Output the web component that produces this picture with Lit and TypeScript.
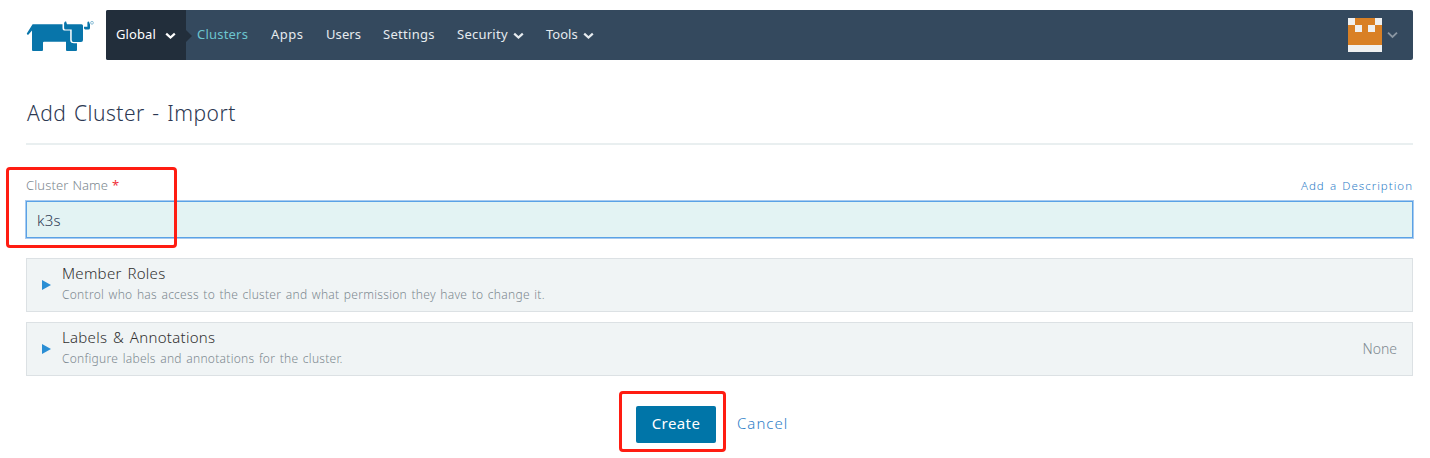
import { LitElement, html, css, svg } from "lit";
import { customElement, property } from "lit/decorators.js";

const chevron = svg`<path d="M1.2 1.6 L5.5 5.6 L9.8 1.6" fill="none" stroke="currentColor" stroke-width="2.2"/>`;

@customElement("nav-bar")
class NavBar extends LitElement {
  static styles = css`
    :host { display: flex; height: 50px; flex: 1; background: #34495e; border-radius: 2px; color: #e6ebef; font-size: 13px; font-weight: 400; line-height: 49px; white-space: nowrap; }
    .scope { position: relative; box-sizing: border-box; width: 80px; padding-left: 10px; background: #222e3b; color: #fff; border-radius: 2px 0 0 2px; display: flex; }
    .scope::after { content: ""; position: absolute; left: 80px; top: 20px; border: 6px solid transparent; border-left-color: #222e3b; border-right: 0; }
    .item { display: flex; padding: 0 11px; }
    .label { display: block; }
    .active { color: #6cc5cf; }
    .chev { width: 11px; height: 8px; margin: 22px 0 0 5px; }
    .scope .chev { margin-left: 9px; }
    .user { margin-left: auto; display: flex; padding: 8px 15px 0 0; color: #8a96a2; }
    .avatar { width: 34px; height: 34px; display: block; }
    .user .chev { margin: 13px 0 0 5px; }
    .w-global { width: 40px; letter-spacing: 0.1px; }
    .w-clusters { width: 52px; letter-spacing: 0.2px; }
    .w-apps { width: 33px; letter-spacing: 0.5px; }
    .w-users { width: 35px; letter-spacing: 0.1px; }
    .w-settings { width: 52px; letter-spacing: 0.3px; }
    .w-security { width: 51px; letter-spacing: 0.25px; }
    .w-tools { width: 32px; }
  `;
  render() {
    const item = (t: string, active = false, menu = false) => html`
      <a class="item ${active ? "active" : ""}"><span class="label w-${t.toLowerCase()}">${t}</span>
      ${menu ? html`<svg class="chev" viewBox="0 0 11 8">${chevron}</svg>` : ""}</a>`;
    return html`
      <a class="scope"><span class="label w-global">Global</span><svg class="chev" viewBox="0 0 11 8">${chevron}</svg></a>
      ${item("Clusters", true)}${item("Apps")}${item("Users")}${item("Settings")}${item("Security", false, true)}${item("Tools", false, true)}
      <div class="user">
        <svg class="avatar" viewBox="0 0 34 34" shape-rendering="crispEdges">
          <rect width="34" height="34" fill="#d98025"/>
          <path d="M0 0h7v7H0zM27 0h7v7h-7zM7 7h7v7H7zM20 7h7v7h-7zM0 27h34v7H0z" fill="#f0f0f0"/>
        </svg>
        <svg class="chev" viewBox="0 0 11 8"><path d="M1 1.6 L5.5 6 L10 1.6" fill="none" stroke="currentColor" stroke-width="1.8"/></svg>
      </div>`;
  }
}

@customElement("expand-panel")
class ExpandPanel extends LitElement {
  @property() heading = "";
  @property() detail = "";
  @property() status = "";
  static styles = css`
    :host { display: flex; box-sizing: border-box; height: 54px; border: 1px solid #dce1e4; background: #f0f4f5; align-items: center; padding: 0 15px; margin-bottom: 10px; }
    .arrow { width: 9px; height: 10px; margin-right: 11px; }
    .body { flex: 1; white-space: nowrap; padding-bottom: 4px; }
    .heading { display: block; font-size: 15px; line-height: 20px; color: #303030; letter-spacing: 0.28px; word-spacing: 1.6px; }
    .detail { font-size: 12px; line-height: 18px; color: #7d8990; margin-top: 3px; letter-spacing: 0.28px; word-spacing: 1.05px; }
    .status { font-size: 14px; color: #7d8990; padding-bottom: 2px; }
  `;
  render() {
    return html`
      <svg class="arrow" viewBox="0 0 9 10"><path d="M0 0L9 5L0 10z" fill="#2a8ed4"/></svg>
      <div class="body"><span class="heading">${this.heading}</span><div class="detail">${this.detail}</div></div>
      <span class="status">${this.status}</span>`;
  }
}

@customElement("app-root")
class AppRoot extends LitElement {
  static styles = css`
    :host { display: block; box-sizing: border-box; height: 458px; padding: 10px 17px 0 26px; background: #fff; font-family: "Noto Sans", "Open Sans", sans-serif; font-weight: 300; overflow: hidden; position: relative; }
    .top { display: flex; }
    .logo { width: 68px; height: 32px; margin: 10px 12px 0 0; }
    .title { margin: 36px 0 0; height: 47px; padding-left: 1px; border-bottom: 2px solid #e9eff0; font-size: 21px; line-height: 34px; font-weight: 300; color: #2c3852; letter-spacing: 0.48px; word-spacing: 1.7px; }
    .labels { display: flex; justify-content: space-between; height: 20px; margin-top: 31px; line-height: 18px; font-size: 13px; color: #7d8990; }
    .name-label { letter-spacing: 0.12px; word-spacing: 0.4px; }
    .req { color: #f0313a; font-weight: 400; }
    .link { color: #2f80c8; }
    .describe { font-size: 11.5px; letter-spacing: 1px; word-spacing: 1.2px; line-height: 20px; }
    .field { box-sizing: border-box; display: flex; align-items: center; height: 37px; margin: 5px 0 20px; padding: 0 10px; border: 1px solid #5aa2e6; outline: 1px solid #a8caef; background: #e3f3f3; color: #2c3852; font-size: 15px; line-height: 34px; letter-spacing: 0.3px; }
    .actions { display: flex; margin: 30px 0 0 610px; line-height: 35px; font-size: 15px; }
    .create { width: 80px; height: 37px; background: #0075a8; color: #fff; border-radius: 2px; text-align: center; margin-right: 21px; font-weight: 400; letter-spacing: 0.4px; }
    .cancel { letter-spacing: 1px; }
    .mark { position: absolute; box-sizing: border-box; border: 3px solid #ff1d12; border-radius: 4px; }
    .mark-name { left: 6px; top: 167px; width: 171px; height: 81px; }
    .mark-create { left: 619px; top: 391px; width: 107px; height: 61px; }
  `;
  render() {
    return html`
      <div class="top">
        <svg class="logo" viewBox="26 20 68 32" fill="#0875aa">
          <path d="M32.6 24.2H62.5V28Q62.5 30.6 65 30.6H70.2V40Q70.2 43.3 74 43.3H77V50Q77 51 76 51H67Q66 51 66 50V41.8H44Q43 41.8 43 42.8V50Q43 51 42 51H33Q32 51 32 50V30.5L28.3 34.7Q26.8 34.8 26.8 33.5Z"/>
          <path d="M64.1 23.5Q64.1 21.5 66 21.3L67 24.2H81.5Q83 24.2 83 25.7V40Q83 41.9 81 41.9H73.5Q71.7 41.9 71.7 40V29.5H65.5Q64.1 29.5 64.1 28Z"/>
          <path d="M84 26.8H87.4V22.5Q87.9 21 89 21.8L90 24.5V28Q90 29.6 88.4 29.6H85.3Q84 29.2 84 28Z"/>
          <circle cx="92" cy="22.8" r="1.4" fill="none" stroke="#5da3c6" stroke-width=".7"/>
        </svg>
        <nav-bar></nav-bar>
      </div>
      <h1 class="title">Add Cluster - Import</h1>
      <div class="labels"><span class="name-label">Cluster Name <span class="req">*</span></span><a class="link describe">Add a Description</a></div>
      <div class="field"><span>k3s</span></div>
      <expand-panel heading="Member Roles" detail="Control who has access to the cluster and what permission they have to change it."></expand-panel>
      <expand-panel heading="Labels &amp; Annotations" detail="Configure labels and annotations for the cluster." status="None"></expand-panel>
      <div class="actions"><a class="create">Create</a><a class="link cancel">Cancel</a></div>
      <div class="mark mark-name"></div>
      <div class="mark mark-create"></div>`;
  }
}
